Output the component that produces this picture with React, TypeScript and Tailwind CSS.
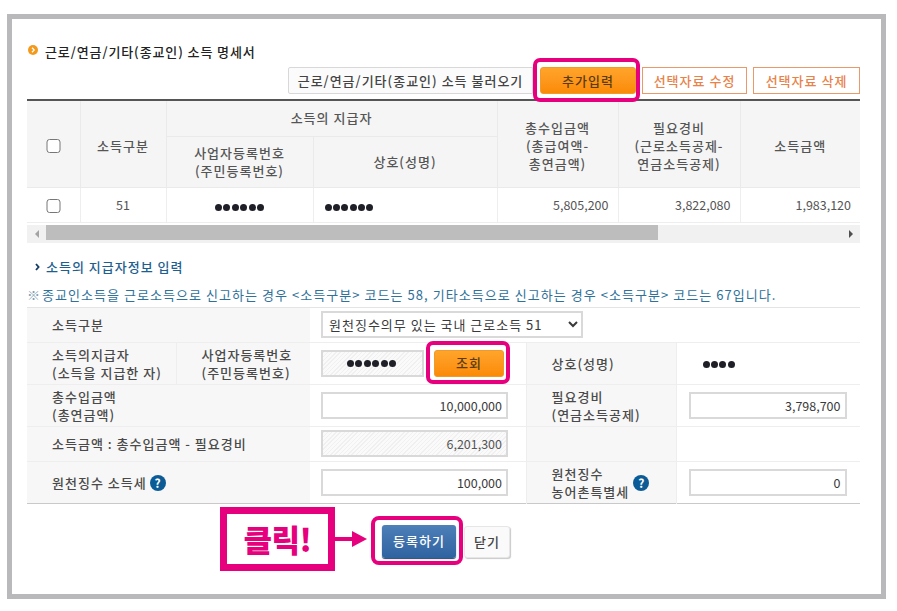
import React from "react";

const F = "[font-family:'Noto_Sans_CJK_KR','Noto_Sans',sans-serif]";

function Check() {
  return <input type="checkbox" readOnly className="appearance-none block mx-auto translate-x-[0.5px] size-[14px] rounded-[3px] border border-[#777] bg-white" />;
}

function Help() {
  return (
    <span className="inline-flex shrink-0 items-center justify-center size-[16px] rounded-full bg-[#0b5c96] text-white text-[12px] font-bold leading-none tracking-normal">?</span>
  );
}

function Dots({ n, cls = "" }: { n: number; cls?: string }) {
  return (
    <span className={`inline-flex gap-[1.4px] ${cls}`}>
      {Array.from({ length: n }).map((_, i) => (
        <span key={i} className="size-[7px] rounded-full bg-[#1f1f28]" />
      ))}
    </span>
  );
}

function Orange({ label, cls }: { label: string; cls: string }) {
  return (
    <button className={`rounded-[3px] bg-gradient-to-b from-[#ffa52a] to-[#fb8a04] border border-[#f09a2c] text-[#5b3c12] text-[13px] font-medium ${cls}`}>
      {label}
    </button>
  );
}

function Field({ value, cls = "w-[187px]" }: { value: string; cls?: string }) {
  return (
    <input
      readOnly
      value={value}
      className={`${cls} block h-[27px] border-2 border-[#d9d9d9] bg-white px-[4px] text-right text-[12.5px] tracking-normal text-[#3a3a3a] outline-none`}
    />
  );
}

const hatch = "bg-[repeating-linear-gradient(135deg,#f0f0f0_0,#f0f0f0_1px,#fafafa_1px,#fafafa_3px)]";
const th = "bg-[#f5f5f5] border-r border-[#eaeaea] font-medium text-center text-[#555] leading-[18px] p-0";
const thTall = `${th} border-b border-[#b5b5b5] pt-[5px]`;
const td = "border-r border-[#eeeeee] text-[#555] p-0 pt-[2px]";
const lab = "bg-[#f7f7f7] text-[#4a4a4a] leading-[17.5px] p-0 pt-[1px] pl-[25px] text-left font-medium";

export default function App() {
  return (
    <div className={`${F} w-[897px] h-[611px] bg-white pl-[7px] pt-[14px] text-[13px] tracking-[1px] overflow-hidden`}>
      <div className="w-[879px] h-[585px] border-[5px] border-[#b9b9bb] pl-[15px] pr-[21px] pt-[24px] box-border bg-white">
        {/* title */}
        <div className="flex items-center h-[18px] gap-[7px] pl-[1px]">
          <svg width="10" height="10" viewBox="0 0 10 10" className="-mt-[5px] shrink-0">
            <circle cx="5" cy="5" r="5" fill="#f39a1c" />
            <path d="M4 2.8 6.2 5 4 7.2" fill="none" stroke="#fff" strokeWidth="1.3" />
          </svg>
          <span className="text-[13px] text-[#222] font-medium tracking-[0.9px]">근로/연금/기타(종교인) 소득 명세서</span>
        </div>

        {/* action buttons */}
        <div className="flex justify-end items-start h-[27px] mt-[6px]">
          <button className="w-[245px] h-[27px] rounded-l-[2px] border border-[#d8d8d8] bg-[#fbfbfb] text-[#444] text-[13px] font-medium text-center">
            근로/연금/기타(종교인) 소득 불러오기
          </button>
          <div className="relative ml-[7px]">
            <Orange label="추가입력" cls="block w-[96px] h-[27px]" />
            <div className="absolute left-[-7px] right-[-4px] top-[-9px] bottom-[-8px] border-[4px] border-[#e6007e] rounded-[7px]" />
          </div>
          <button className="ml-[6px] w-[105px] h-[27px] border border-[#e9996a] bg-white text-[#e8824a] text-[13px] font-medium">선택자료 수정</button>
          <button className="ml-[6px] w-[107px] h-[27px] border border-[#e9996a] bg-white text-[#e8824a] text-[13px] font-medium">선택자료 삭제</button>
        </div>

        {/* list table */}
        <table className="mt-[5px] w-[833px] table-fixed border-t-2 border-[#555]">
          <colgroup>
            <col className="w-[53px]" />
            <col className="w-[86px]" />
            <col className="w-[147px]" />
            <col className="w-[184px]" />
            <col className="w-[121px]" />
            <col className="w-[122px]" />
            <col className="w-[120px]" />
          </colgroup>
          <thead>
            <tr className="h-[36px]">
              <th rowSpan={2} className={thTall}><Check /></th>
              <th rowSpan={2} className={thTall}>소득구분</th>
              <th colSpan={2} className={`${th} border-b border-[#b5b5b5]`}>소득의 지급자</th>
              <th rowSpan={2} className={thTall}>총수입금액<br />(총급여액-<br />총연금액)</th>
              <th rowSpan={2} className={thTall}>필요경비<br />(근로소득공제-<br />연금소득공제)</th>
              <th rowSpan={2} className={`${thTall} border-r-0`}>소득금액</th>
            </tr>
            <tr className="h-[51px]">
              <th className={`${th} border-b border-[#b5b5b5]`}>사업자등록번호<br />(주민등록번호)</th>
              <th className={`${th} border-b border-[#b5b5b5]`}>상호(성명)</th>
            </tr>
          </thead>
          <tbody>
            <tr className="h-[35px] border-b border-[#eeeeee]">
              <td className={td}><Check /></td>
              <td className={`${td} text-center tracking-normal text-[12.5px]`}>51</td>
              <td className={`${td} text-center`}><Dots n={6} cls="align-middle" /></td>
              <td className={`${td} pl-[11px]`}><Dots n={6} cls="align-middle" /></td>
              <td className={`${td} text-right pr-[9px] tracking-normal text-[12.5px]`}>5,805,200</td>
              <td className={`${td} text-right pr-[9px] tracking-normal text-[12.5px]`}>3,822,080</td>
              <td className={`${td} text-right pr-[9px] tracking-normal text-[12.5px] border-r-0`}>1,983,120</td>
            </tr>
          </tbody>
        </table>

        {/* scrollbar */}
        <div className="mt-[2px] flex items-stretch h-[18px] w-[833px] bg-[#f1f1f1]">
          <div className="w-[19px] flex items-center justify-center">
            <span className="border-y-[4px] border-y-transparent border-r-[4px] border-r-[#a3a3a3]" />
          </div>
          <div className="w-[612px] h-[15px] bg-[#bdbdbd]" />
          <div className="flex-1 flex items-center justify-end pr-[7px]">
            <span className="border-y-[4px] border-y-transparent border-l-[4px] border-l-[#505050]" />
          </div>
        </div>

        {/* section heading */}
        <div className="mt-[15px] h-[18px] flex items-center gap-[6px] pl-[8px]">
          <svg width="5" height="8" viewBox="0 0 5 8" className="shrink-0">
            <path d="M1 1 3.6 4 1 7" fill="none" stroke="#123a63" strokeWidth="1.8" />
          </svg>
          <span className="text-[13px] text-[#1f5f8f] font-medium">소득의 지급자정보 입력</span>
        </div>

        <div className="mt-[10px] h-[17px] leading-[17px] text-[13px] tracking-[1.05px] text-[#2e7199] whitespace-nowrap">
          <span className="inline-block w-[15px] text-[#7c9db5]">※</span>종교인소득을 근로소득으로 신고하는 경우 &lt;소득구분&gt; 코드는 58, 기타소득으로 신고하는 경우 &lt;소득구분&gt; 코드는 67입니다.
        </div>

        {/* form table */}
        <table className="mt-[4px] w-[833px] table-fixed border-t border-[#e4e4e4] border-b border-b-[#c9c9c9]">
          <colgroup>
            <col className="w-[149px]" />
            <col className="w-[134px]" />
            <col className="w-[216px]" />
            <col className="w-[150px]" />
            <col className="w-[184px]" />
          </colgroup>
          <tbody>
            <tr className="h-[35px] border-b border-[#eeeeee]">
              <th colSpan={2} className={lab}>소득구분</th>
              <td colSpan={3} className="p-0 pl-[11px]">
                <select className="block w-[262px] h-[27px] border-2 border-[#d9d9d9] bg-white pl-[2px] text-[13px] text-[#3a3a3a] outline-none">
                  <option>원천징수의무 있는 국내 근로소득 51</option>
                </select>
              </td>
            </tr>
            <tr className="h-[42px] border-b border-[#eeeeee]">
              <th className={`${lab} border-r border-[#eeeeee]`}>소득의지급자<br />(소득을 지급한 자)</th>
              <th className={lab}>사업자등록번호<br />(주민등록번호)</th>
              <td className="p-0 pl-[11px] border-r border-[#eeeeee]">
                <div className="flex items-center">
                  <div className={`w-[103px] h-[27px] border-2 border-[#d9d9d9] ${hatch} flex items-center pl-[24px]`}>
                    <Dots n={6} />
                  </div>
                  <div className="relative ml-[10px]">
                    <Orange label="조회" cls="block w-[70px] h-[27px]" />
                    <div className="absolute left-[-8px] right-[-6px] top-[-9px] bottom-[-7px] border-[4px] border-[#e6007e] rounded-[7px]" />
                  </div>
                </div>
              </td>
              <th className={`${lab} border-r border-[#eeeeee]`}>상호(성명)</th>
              <td className="p-0 pl-[26px]"><Dots n={4} cls="align-middle" /></td>
            </tr>
            <tr className="h-[42px] border-b border-[#eeeeee]">
              <th colSpan={2} className={lab}>총수입금액<br />(총연금액)</th>
              <td className="p-0 pl-[11px] border-r border-[#eeeeee]"><Field value="10,000,000" /></td>
              <th className={`${lab} border-r border-[#eeeeee]`}>필요경비<br />(연금소득공제)</th>
              <td className="p-0 pl-[12px]"><Field value="3,798,700" cls="w-[158px]" /></td>
            </tr>
            <tr className="h-[35px] border-b border-[#eeeeee]">
              <th colSpan={2} className={lab}>소득금액 : 총수입금액 - 필요경비</th>
              <td className="p-0 pl-[11px] border-r border-[#eeeeee]">
                <input readOnly value="6,201,300" className={`block w-[187px] h-[27px] border-2 border-[#d9d9d9] ${hatch} px-[4px] text-right text-[12.5px] tracking-normal text-[#555] outline-none`} />
              </td>
              <th className={`${lab} border-r border-[#eeeeee]`}></th>
              <td className="p-0"></td>
            </tr>
            <tr className="h-[42px]">
              <th colSpan={2} className={lab}>
                <span className="inline-flex items-center gap-[3px]">원천징수 소득세<Help /></span>
              </th>
              <td className="p-0 pl-[11px] border-r border-[#eeeeee]"><Field value="100,000" /></td>
              <th className={`${lab} border-r border-[#eeeeee]`}>
                <span className="inline-flex items-center gap-[4px]">
                  <span>원천징수<br />농어촌특별세</span>
                  <Help />
                </span>
              </th>
              <td className="p-0 pl-[12px]"><Field value="0" cls="w-[158px]" /></td>
            </tr>
          </tbody>
        </table>

        {/* bottom actions */}
        <div className="mt-[3px] flex items-start pl-[193px]">
          <div className="w-[115px] h-[64px] border-[7px] border-[#e6007e] flex items-center justify-center bg-white text-[#e6007e] text-[31px] font-black tracking-[-0.5px] leading-none">
            클릭!
          </div>
          <svg width="33" height="16" viewBox="0 0 33 16" className="mt-[24px] shrink-0">
            <path d="M0 6H17V0L32 8 17 16V10H0Z" fill="#e6007e" />
          </svg>
          <div className="relative ml-[14px] mt-[18px]">
            <button className="block w-[74px] h-[33px] rounded-[3px] bg-gradient-to-b from-[#4d7fb8] to-[#2f63a0] text-white text-[13px] font-medium shadow-[0_1px_1px_#24456f]">
              등록하기
            </button>
            <div className="absolute left-[-11px] right-[-7px] top-[-9px] bottom-[-7px] border-[4px] border-[#e6007e] rounded-[8px]" />
          </div>
          <button className="ml-[8px] mt-[19px] w-[46px] h-[32px] rounded-[3px] bg-[#fafafa] border border-[#e6e6e6] shadow-[1px_1px_1px_#c9c9c9] text-[#444] text-[13px] font-medium">
            닫기
          </button>
        </div>
      </div>
    </div>
  );
}
